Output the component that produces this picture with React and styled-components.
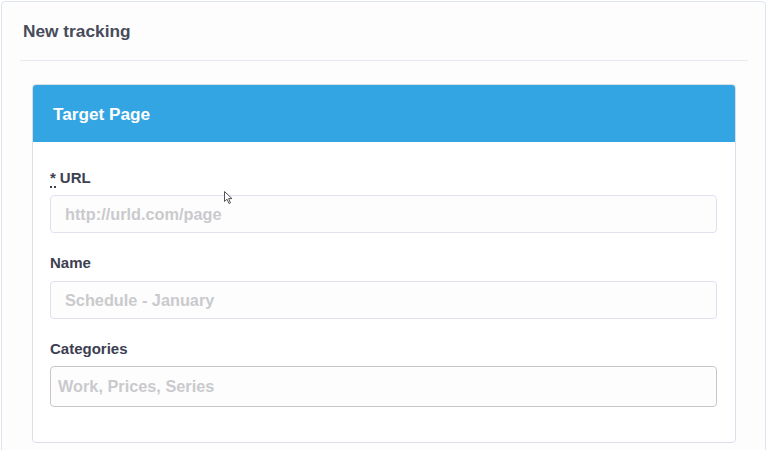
import React from "react";
import styled, { createGlobalStyle } from "styled-components";

const GlobalStyle = createGlobalStyle`
  html, body { margin: 0; padding: 0; background: #ffffff; }
  body { font-family: "Liberation Sans", Arial, sans-serif; }
  * { box-sizing: border-box; }
`;

const Page = styled.div`
  position: relative;
  padding: 1px 2px 0 1px;
  height: 450px;
  overflow: hidden;
`;

const Card = styled.section`
  background: #fdfdfd;
  border: 1px solid #dfe4ee;
  border-radius: 4px;
  height: 480px;
`;

const CardHeader = styled.header`
  margin: 0 17px 0 18px;
  height: 59px;
  display: flex;
  align-items: center;
  border-bottom: 1px solid #e6e9f0;
  padding-left: 3px;
`;

const Title = styled.h1`
  margin: 0;
  font-size: 17.3px;
  line-height: 20px;
  font-weight: 700;
  color: #474b5b;
`;

const CardBody = styled.div`
  padding: 23px 29px 0 30px;
`;

const Panel = styled.div`
  border: 1px solid #d9dee7;
  border-radius: 4px;
  background: #ffffff;
  overflow: hidden;
`;

const PanelHeader = styled.div`
  background: #34a5e3;
  height: 58px;
  display: flex;
  align-items: center;
  padding-left: 21px;
  margin: -1px -1px 0 -1px;
  border-radius: 4px 4px 0 0;
`;

const PanelTitle = styled.h2`
  margin: 0;
  font-size: 17.2px;
  font-weight: 700;
  color: #ffffff;
  line-height: 20px;
  padding-top: 1px;
`;

const PanelBody = styled.div`
  padding: 26px 18px 35px 17px;
  display: flex;
  flex-direction: column;
  gap: 20px;
`;

const Field = styled.div`
  display: flex;
  flex-direction: column;
`;

const Label = styled.label`
  font-size: 15px;
  line-height: 20px;
  font-weight: 700;
  color: #3c4051;
  margin-bottom: ${(p) => (p.$tight ? 7 : 8)}px;
`;

const Required = styled.abbr`
  text-decoration: none;
  border-bottom: 2px dotted #3c4051;
  margin-right: 4px;
  font-weight: 700;
`;

const Input = styled.input`
  height: ${(p) => (p.$tall ? 41 : 38)}px;
  width: 100%;
  border: 1px solid ${(p) => (p.$dark ? "#c9c5ca" : "#dfe2ec")};
  border-radius: 4px;
  background: #fdfdfd;
  padding: 0 0 0 ${(p) => (p.$tall ? 7 : 14)}px;
  font-family: "Liberation Sans", Arial, sans-serif;
  font-size: 16.3px;
  font-weight: 700;
  color: #333;
  outline: none;
  &::placeholder {
    color: #cacacd;
    opacity: 1;
  }
`;

const Cursor = styled.svg`
  position: absolute;
  left: 224px;
  top: 191px;
  pointer-events: none;
`;

export default function App() {
  return (
    <>
      <GlobalStyle />
      <Page>
        <Card>
          <CardHeader>
            <Title>New tracking</Title>
          </CardHeader>
          <CardBody>
            <Panel>
              <PanelHeader>
                <PanelTitle>Target Page</PanelTitle>
              </PanelHeader>
              <PanelBody>
                <Field>
                  <Label $tight>
                    <Required title="required">*</Required>URL
                  </Label>
                  <Input placeholder="http://urld.com/page" />
                </Field>
                <Field>
                  <Label>Name</Label>
                  <Input placeholder="Schedule - January" />
                </Field>
                <Field>
                  <Label $tight>Categories</Label>
                  <Input $tall $dark placeholder="Work, Prices, Series" />
                </Field>
              </PanelBody>
            </Panel>
          </CardBody>
        </Card>
        <Cursor width="9" height="14" viewBox="0 0 9 14">
          <path d="M0.5 0.5 L0.5 10.5 L3 8.2 L5 12.5 L6.5 11.8 L4.6 7.6 L8 7.6 Z" fill="#ffffff" stroke="#555" strokeWidth="1" strokeLinejoin="round" />
        </Cursor>
      </Page>
    </>
  );
}
